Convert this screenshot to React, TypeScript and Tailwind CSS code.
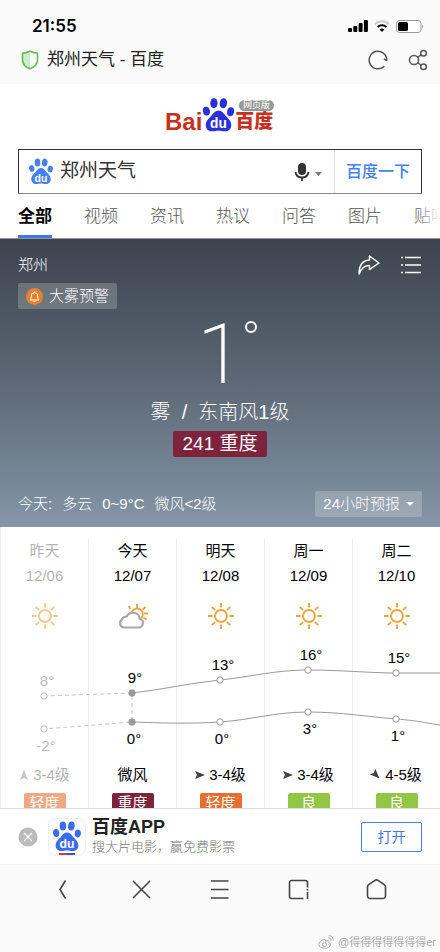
import { useState } from "react";

type Day = {
  day: string;
  date: string;
  icon: "sun" | "cloudy";
  high: number;
  low: number;
  wind: string;
  arrow?: string;
  quality: string;
  badge: string;
  past?: boolean;
};

const DAYS: Day[] = [
  { day: "昨天", date: "12/06", icon: "sun", high: 8, low: -2, wind: "3-4级", arrow: "-rotate-90", quality: "轻度", badge: "bg-[#e87030]", past: true },
  { day: "今天", date: "12/07", icon: "cloudy", high: 9, low: 0, wind: "微风", quality: "重度", badge: "bg-[#7d233d]" },
  { day: "明天", date: "12/08", icon: "sun", high: 13, low: 0, wind: "3-4级", arrow: "rotate-0", quality: "轻度", badge: "bg-[#e46f2e]" },
  { day: "周一", date: "12/09", icon: "sun", high: 16, low: 3, wind: "3-4级", arrow: "rotate-0", quality: "良", badge: "bg-[#94c645]" },
  { day: "周二", date: "12/10", icon: "sun", high: 15, low: 1, wind: "4-5级", arrow: "rotate-45", quality: "良", badge: "bg-[#94c645]" },
];

const TABS = ["全部", "视频", "资讯", "热议", "问答", "图片", "贴吧"];

const COL = 88;
const pointX = (i: number) => i * COL + COL / 2;
const pointY = (temp: number) => Math.round(83 - temp * 3.25);

function Paw({ className, color }: { className: string; color: string }) {
  return (
    <svg viewBox="0 0 48 52" className={className} aria-hidden="true">
      <g fill={color}>
        <ellipse cx="5.5" cy="20" rx="5.3" ry="6.8" transform="rotate(-12 5.5 20)" />
        <ellipse cx="17" cy="8" rx="5.6" ry="7.8" />
        <ellipse cx="31.5" cy="8" rx="5.6" ry="7.8" transform="rotate(8 31.5 8)" />
        <ellipse cx="42.5" cy="21" rx="5.3" ry="6.8" transform="rotate(10 42.5 21)" />
        <path d="M24 19c5 0 7.500 3.500 10 7 3 4 9.500 8 9.500 15.500 0 6-4.500 9.500-9.500 9.500-4 0-6.500-1-10-1s-6 1-10 1c-5 0-9.500-3.500-9.500-9.500C4.500 34 11 30 14 26c2.500-3.500 5-7 10-7Z" />
      </g>
      <text x="24" y="46" textAnchor="middle" fill="#fff" fontSize="21" fontWeight="700" fontFamily="Liberation Sans, sans-serif">du</text>
    </svg>
  );
}

function SunIcon() {
  return (
    <svg viewBox="0 0 28 28" className="size-7" fill="none" stroke="#eba63f" strokeWidth="1.9" aria-hidden="true">
      <circle cx="14" cy="14" r="6" />
      <path d="M14 1v4.500M14 22.500V27M1 14h4.500M22.500 14H27M4.800 4.800 8 8M20 20l3.200 3.200M4.800 23.200 8 20M20 8l3.200-3.200" />
    </svg>
  );
}

function CloudyIcon() {
  return (
    <svg viewBox="0 0 32 28" className="h-7 w-8" fill="none" strokeWidth="1.9" aria-hidden="true">
      <g stroke="#eba63f">
        <path d="M14.500 10.500a5.800 5.800 0 1 1 9.500 6" />
        <path d="M20 2v4M11.500 4l2 3M28.500 5l-3 2.800M27 11.500h4M26.500 15.500l3 2" />
      </g>
      <path stroke="#a6a6ab" strokeWidth="2.200" d="M7 25.500h14.500a4.500 4.500 0 0 0 1.200-8.800 6.800 6.800 0 0 0-12.900-2.200 5.600 5.600 0 0 0-5.300 3.500A4.300 4.300 0 0 0 7 25.500Z" />
    </svg>
  );
}

function TempChart() {
  return (
    <svg width={COL * 5} height="120" className="absolute top-[112px] -left-px font-['Liberation_Sans',sans-serif]" role="img" aria-label="气温曲线">
      <g fill="none" stroke="#999">
        <path stroke="#c4c4c4" strokeDasharray="4 3" d={`M44 ${pointY(8)}L132 ${pointY(9)}V${pointY(0)}L44 ${pointY(-2)}`} />
        <path d="M132 54C160 51 190 44 220 41S275 31 308 31S370 34 396 34H440" />
        <path d="M132 83C160 84 190 85 220 83S275 73 308 73S370 78 396 80S425 84 440 86" />
      </g>
      {DAYS.map((d, i) => {
        const today = i === 1;
        const stroke = d.past ? "#bbb" : "#999";
        return (
          <g key={d.date} fontSize="15" textAnchor="middle">
            <circle cx={pointX(i)} cy={pointY(d.high)} r="3.2" fill={today ? "#999" : "#fff"} stroke={stroke} />
            <circle cx={pointX(i)} cy={pointY(d.low)} r="3.2" fill={today ? "#999" : "#fff"} stroke={stroke} />
            <text x={pointX(i) + 3} y={pointY(d.high) - 10} fill={d.past ? "#bbb" : "#000"}>{d.high}°</text>
            <text x={pointX(i) + 2} y={pointY(d.low) + 22} fill={d.past ? "#bbb" : "#000"}>{d.low}°</text>
          </g>
        );
      })}
    </svg>
  );
}

function StatusBar() {
  return (
    <div className="flex h-9 items-end justify-between pr-4 pl-8">
      <span className="font-['Inter',sans-serif] text-[17px] leading-5 font-semibold text-black">21:55</span>
      <div className="flex h-5 items-center gap-1.5">
        <svg viewBox="0 0 20 12" className="h-3 w-5" aria-hidden="true">
          <rect x="0" y="8" width="4" height="4" rx="1" />
          <rect x="5.3" y="6" width="4" height="6" rx="1" />
          <rect x="10.6" y="3" width="4" height="9" rx="1" />
          <rect x="15.9" y="0" width="4" height="12" rx="1" />
        </svg>
        <svg viewBox="0 0 16 12" className="h-3 w-4" fill="none" strokeWidth="2" aria-hidden="true">
          <path stroke="#ccc" d="M1 4.200a10 10 0 0 1 14 0" />
          <path stroke="#000" d="M3.600 7a6.400 6.400 0 0 1 8.800 0" />
          <path fill="#000" d="M8 12 5.600 9.600a3.400 3.400 0 0 1 4.800 0Z" />
        </svg>
        <svg viewBox="0 0 28 13" className="h-[13px] w-7" aria-hidden="true">
          <rect x="0.5" y="0.5" width="24.5" height="12" rx="3" fill="#fff" stroke="#999" />
          <rect x="2" y="2" width="10" height="9" rx="1.500" />
          <path d="M26.300 4.500v4c1.200-.5 1.200-3.500 0-4Z" fill="#999" />
        </svg>
      </div>
    </div>
  );
}

function TitleBar() {
  return (
    <div className="flex h-12 items-center pr-3 pl-[21px]">
      <svg viewBox="0 0 18 20" className="h-5 w-[18px]" aria-hidden="true">
        <path d="M9 1.200C6.500 2.500 4 3 1.500 3v7c0 4.500 3 7 7.500 8.800Z" fill="#cdeccb" />
        <path d="M9 1.200C6.500 2.500 4 3 1.500 3v7c0 4.500 3 7 7.500 8.800 4.500-1.800 7.500-4.300 7.500-8.800V3C14 3 11.500 2.500 9 1.200Z" fill="none" stroke="#62bd5b" strokeWidth="1.600" strokeLinejoin="round" />
      </svg>
      <h1 className="ml-2 flex-1 text-[17px] text-[#222]">郑州天气 - 百度</h1>
      <button aria-label="刷新">
        <svg viewBox="0 0 20 20" className="size-5" fill="none" stroke="#555" strokeWidth="1.500" aria-hidden="true">
          <path d="M16.300 16.200A8.800 8.800 0 1 1 18.800 10M19 10.800l-3-2" />
        </svg>
      </button>
      <button aria-label="分享" className="ml-5">
        <svg viewBox="0 0 20 22" className="h-[22px] w-5" fill="none" stroke="#555" strokeWidth="1.500" aria-hidden="true">
          <circle cx="6" cy="11" r="4.600" />
          <circle cx="15.500" cy="4.200" r="2.800" />
          <circle cx="15.500" cy="17.800" r="2.800" />
          <path d="m9.600 8.300 3.400-2.400M9.600 13.700l3.400 2.300" />
        </svg>
      </button>
    </div>
  );
}

function Logo() {
  return (
    <a href="#home" className="relative mx-auto mt-[14px] flex h-9 w-[110px] items-end text-[#c7301f]">
      <span className="font-['Liberation_Sans',sans-serif] text-2xl leading-6 font-bold">Bai</span>
      <Paw className="mb-0.5 h-[34px] w-[33px]" color="#2a31d8" />
      <span className="text-[19px] leading-6 font-black">百度</span>
      <span className="absolute top-0.5 left-[74px] rounded-full bg-[#999] px-1 text-[9px] leading-[11px] text-white">网页版</span>
    </a>
  );
}

function SearchBox() {
  const [query, setQuery] = useState("郑州天气");
  return (
    <form className="mx-[18px] mt-[15px] flex h-[45px] items-center border border-[#333] border-b-[#888]" onSubmit={(e) => e.preventDefault()}>
      <Paw className="ml-2.5 h-[27px] w-6 shrink-0" color="#4581f0" />
      <input
        aria-label="搜索"
        className="ml-[7px] min-w-0 flex-1 text-[19px] text-[#333] outline-none"
        value={query}
        onChange={(e) => setQuery(e.target.value)}
      />
      <button type="button" aria-label="语音搜索" className="mr-3">
        <svg viewBox="0 0 28 18" className="h-[18px] w-7" aria-hidden="true">
          <rect x="4" y="0" width="8" height="12" rx="4" fill="#333" />
          <path d="M1.500 9c.5 3.500 3 5.500 6.500 5.500s6-2 6.500-5.500M8 14.500V18" fill="none" stroke="#333" strokeWidth="1.800" />
          <path d="M21 9h7l-3.500 4Z" fill="#777" />
        </svg>
      </button>
      <button type="submit" className="h-full w-[87px] border-l border-[#ddd] text-base font-medium text-[#4581f0]">百度一下</button>
    </form>
  );
}

function Tabs() {
  return (
    <nav className="relative overflow-hidden">
      <ul className="flex w-max gap-8 pl-[18px] text-[17px]">
        {TABS.map((tab, i) => (
          <li key={tab}>
            <a
              href={`#${tab}`}
              className={`block h-11 border-b-3 leading-[46px] whitespace-nowrap ${i === 0 ? "border-[#3f78ea] font-bold text-black" : "border-transparent font-light text-[#555]"}`}
            >
              {tab}
            </a>
          </li>
        ))}
      </ul>
      <div className="absolute inset-y-0 right-0 w-6 bg-gradient-to-r from-white/0 to-white" />
    </nav>
  );
}

function Hero() {
  return (
    <section className="flex flex-col border-t border-[#929699] bg-gradient-to-b from-[#3c444f] via-[#5d6976] to-[#8596a8] px-[18px] text-white">
      <div className="mt-3.5 flex h-6 items-center">
        <h2 className="flex-1 text-[15px] font-light">郑州</h2>
        <button aria-label="转发">
          <svg viewBox="0 0 22 20" className="h-5 w-[22px]" fill="none" stroke="#fff" strokeWidth="1.500" strokeLinejoin="round" aria-hidden="true">
            <path d="M11.500 1 21 8l-9.500 6.500v-4C6 10.500 3 13.500 1.200 19 .5 10.500 4.500 5.500 11.500 5Z" />
          </svg>
        </button>
        <button aria-label="城市列表" className="ml-5">
          <svg viewBox="0 0 22 20" className="h-5 w-[22px]" stroke="#fff" strokeWidth="1.500" aria-hidden="true">
            <path d="M1 2.500h2M5 2.500h16M1 10h2M5 10h16M1 17.500h2M5 17.500h16" />
          </svg>
        </button>
      </div>
      <a href="#alert" className="mt-1.5 flex h-[26px] items-center gap-1.5 self-start rounded-xs bg-white/20 px-2 text-[15px] font-light">
        <svg viewBox="0 0 17 17" className="size-[17px]" aria-hidden="true">
          <circle cx="8.500" cy="8.500" r="8.500" fill="#e8812f" />
          <path d="M4 12h9c-1.200-1-1.200-2.200-1.200-4a3.300 3.300 0 0 0-6.600 0c0 1.800 0 3-1.200 4ZM7.500 13.500h2M8.500 4.700V3.500" fill="none" stroke="#fff" />
        </svg>
        大雾预警
      </a>
      <div className="flex flex-col items-center">
        <p className="relative mt-2 font-['Roboto',sans-serif] text-[84px] leading-[76px] font-extralight">
          1
          <span className="absolute top-1 left-12 size-3 rounded-full border-2 border-white" aria-label="度" />
        </p>
        <p className="mt-[5px] text-xl leading-7 font-light whitespace-pre">雾  /  东南风1级</p>
        <p className="mt-[5px] h-[26px] rounded-xs bg-[#7d233d] px-2.5 text-[19px] leading-[26px]">241 重度</p>
      </div>
      <div className="mt-[34px] mb-[10px] flex h-[26px] items-center text-[15px] font-light">
        <p className="flex flex-1 gap-2.5 whitespace-nowrap">
          <span>今天:</span>
          <span>多云</span>
          <span>0~9°C</span>
          <span>微风&lt;2级</span>
        </p>
        <button className="flex h-[26px] items-center gap-1.5 rounded-xs bg-white/20 px-2">
          24小时预报
          <svg viewBox="0 0 8 4" className="h-1 w-2" aria-hidden="true">
            <path d="M0 0h8L4 4Z" fill="#fff" />
          </svg>
        </button>
      </div>
    </section>
  );
}

function Forecast() {
  return (
    <section className="relative flex w-max border-l border-[#eee] pt-3">
      {DAYS.map((d) => (
        <div key={d.date} className="flex w-[88px] flex-col items-center border-r border-[#eee] text-[15px] leading-6 text-black">
          <div className={`flex flex-col items-center ${d.past ? "opacity-30" : ""}`}>
            <span>{d.day}</span>
            <span className="mt-px">{d.date}</span>
          </div>
          <div className={`mt-3.5 flex h-7 items-center ${d.past ? "opacity-60" : ""}`}>
            {d.icon === "sun" ? <SunIcon /> : <CloudyIcon />}
          </div>
          <div className={`mt-[133px] flex items-center gap-1 ${d.past ? "opacity-30" : ""}`}>
            {d.arrow && (
              <svg viewBox="0 0 10 10" className={`size-2.5 ${d.arrow}`} aria-hidden="true">
                <path d="M0 1 10 5 0 9l2-4Z" fill="#444" />
              </svg>
            )}
            {d.wind}
          </div>
          <span className={`mt-1.5 mb-4 w-[42px] rounded-xs text-center leading-5 text-white ${d.badge} ${d.past ? "opacity-60" : ""}`}>{d.quality}</span>
        </div>
      ))}
      <TempChart />
    </section>
  );
}

function AppBanner() {
  return (
    <aside className="flex h-14 shrink-0 items-center border-t border-[#ddd] bg-white px-[18px]">
      <button aria-label="关闭" className="shrink-0">
        <svg viewBox="0 0 20 20" className="size-5" aria-hidden="true">
          <circle cx="10" cy="10" r="9.500" fill="#bbb" />
          <path d="m6 6 8 8M14 6l-8 8" stroke="#fff" strokeWidth="1.200" />
        </svg>
      </button>
      <div className="ml-2.5 flex size-[38px] shrink-0 flex-col items-center justify-between rounded-lg border border-[#eee] pt-0.5">
        <Paw className="h-[31px] w-7" color="#3a6cf0" />
        <div className="h-0.5 w-4 bg-gradient-to-r from-[#d23b3b] from-50% to-[#3a4fd0] to-50%" />
      </div>
      <div className="ml-1.5 min-w-0 flex-1 whitespace-nowrap">
        <p className="text-lg leading-5 font-bold text-[#222]">百度APP</p>
        <p className="text-[13px] leading-5 font-light text-[#777]">搜大片电影，赢免费影票</p>
      </div>
      <button className="h-[30px] w-[61px] rounded-xs border border-[#4581f0] text-sm text-[#3f78ea]">打开</button>
    </aside>
  );
}

const TOOLS = [
  { label: "后退", d: "M14.500 3.500 9 12.500l5.500 9" },
  { label: "停止", d: "m4 4 17 17M21 4 4 21" },
  { label: "菜单", d: "M4 4h17.500M4 12.500h17.500M4 21h17.500" },
  { label: "窗口", d: "M17.500 21.500h-12a2 2 0 0 1-2-2v-14a2 2 0 0 1 2-2h14a2 2 0 0 1 2 2v5M21.500 12v1.500M21.500 15v7" },
  { label: "主页", d: "M3.500 9.800q0-1.400 1.200-2.200l6.300-4.200q1.500-1 3 0l6.300 4.200q1.200.8 1.200 2.200v9.200a2.500 2.500 0 0 1-2.500 2.500H6a2.500 2.500 0 0 1-2.500-2.500Z" },
];

function Toolbar() {
  return (
    <footer className="flex h-[88px] shrink-0 flex-col justify-between border-t border-[#f2f2f2] bg-[#fafafa]">
      <div className="flex justify-around px-6 pt-3">
        {TOOLS.map((tool) => (
          <button key={tool.label} aria-label={tool.label}>
            <svg viewBox="0 0 25 25" className="size-[25px]" fill="none" stroke="#444" strokeWidth="1.600" aria-hidden="true">
              <path d={tool.d} />
            </svg>
          </button>
        ))}
      </div>
      <p className="flex items-center justify-end gap-1 pr-1 text-[11px] leading-5 text-[#aaa]">
        <svg viewBox="0 0 16 14" className="h-3.5 w-4" fill="none" stroke="#aaa" aria-hidden="true">
          <path d="M6 4.500C3 5 .8 7.500.8 9.500c0 5 11.700 5 11.700 0 0-1-.8-1.500-1.700-1.800.4-2-1-2.500-3.300-1.500C8 5 7.500 4.300 6 4.500ZM10 3c2-.5 3.500 1 3 3M10.500.8c3-.5 5.300 2 4.500 5" />
          <circle cx="6.500" cy="9.500" r="2" />
        </svg>
        @得得得得得得得er
      </p>
    </footer>
  );
}

export default function App() {
  return (
    <div className="flex h-screen flex-col bg-white font-['Liberation_Sans','Noto_Sans_CJK_SC',sans-serif]">
      <header className="shrink-0 bg-[#fafafa]">
        <StatusBar />
        <TitleBar />
      </header>
      <main className="min-h-0 flex-1 overflow-hidden">
        <Logo />
        <SearchBox />
        <Tabs />
        <Hero />
        <Forecast />
      </main>
      <AppBanner />
      <Toolbar />
    </div>
  );
}
